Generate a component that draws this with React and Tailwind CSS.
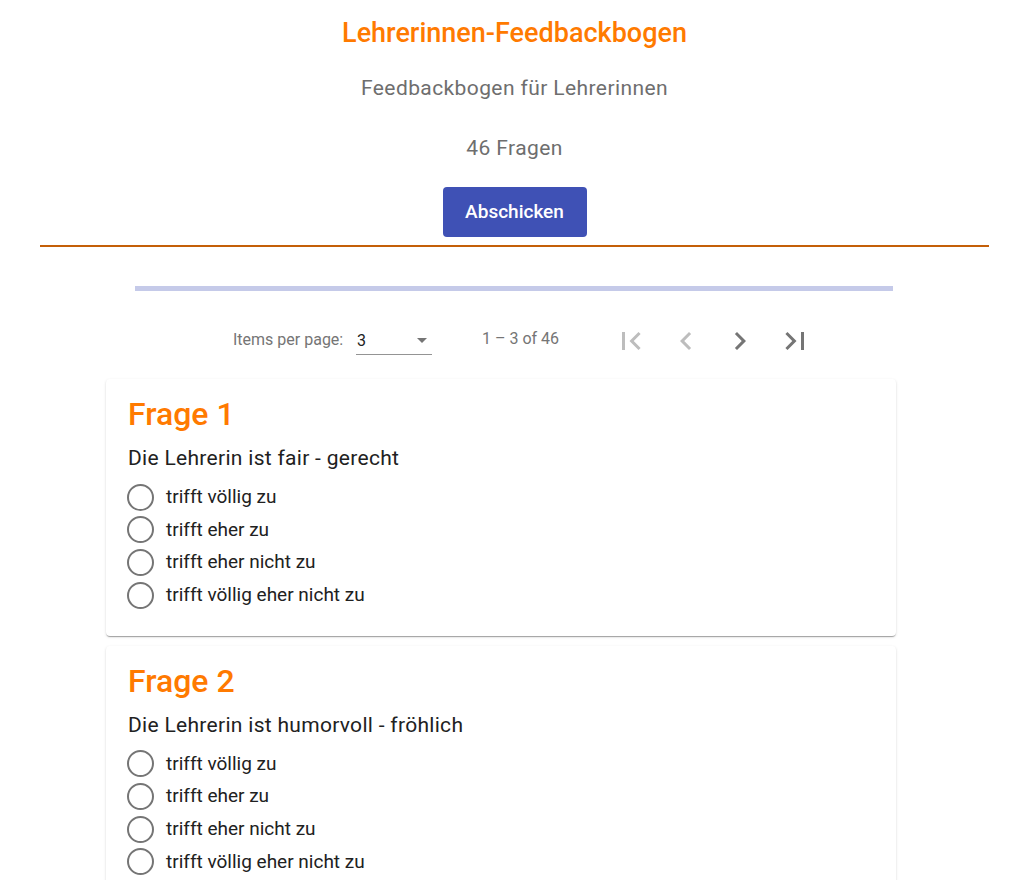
import React from 'react';

const questions = [
  { nr: 1, text: 'Die Lehrerin ist fair - gerecht' },
  { nr: 2, text: 'Die Lehrerin ist humorvoll - fröhlich' },
  { nr: 3, text: 'Die Lehrerin ist geduldig - ruhig' },
];

const options = ['trifft völlig zu', 'trifft eher zu', 'trifft eher nicht zu', 'trifft völlig eher nicht zu'];

function Icon({ d }) {
  return (
    <svg viewBox="0 0 24 24" width="36" height="36" fill="currentColor">
      <path d={d} />
    </svg>
  );
}

function QuestionCard({ q }) {
  return (
    <div className="bg-white rounded-[4px] pt-[16px] pb-[24px] px-[22px] shadow-[0_2px_1px_-1px_rgba(0,0,0,0.2),0_1px_1px_0_rgba(0,0,0,0.14),0_1px_3px_0_rgba(0,0,0,0.12)]">
      <h2 className="text-[32px] leading-[38px] font-medium text-[#ff7a00]">Frage {q.nr}</h2>
      <p className="mt-[11px] text-[21px] leading-[28px] tracking-[0.3px] text-[#212121]">{q.text}</p>
      <div className="mt-[9px] flex flex-col">
        {options.map((o) => (
          <label key={o} className="h-[32.67px] flex items-center gap-[12px] cursor-pointer">
            <span className="-ml-[1px] w-[27px] h-[27px] rounded-full border-2 border-[#757575] shrink-0" />
            <span className="text-[19px] text-[#212121]">{o}</span>
          </label>
        ))}
      </div>
    </div>
  );
}

export default function App() {
  return (
    <div className="w-[1029px] bg-white font-['Roboto',sans-serif] pt-[19px] pb-10">
      <div className="flex flex-col items-center">
        <h1 className="text-[27px] leading-[28px] font-medium text-[#ff7a00]">Lehrerinnen-Feedbackbogen</h1>
        <p className="mt-[29px] text-[21px] leading-[24px] tracking-[0.4px] text-[#6e6e6e]">Feedbackbogen für Lehrerinnen</p>
        <p className="mt-[36px] text-[21px] leading-[24px] tracking-[0.4px] text-[#6e6e6e]">46 Fragen</p>
        <button className="mt-[27px] w-[144px] h-[50px] rounded-[4px] bg-[#3f51b5] text-white text-[19px] font-medium">
          Abschicken
        </button>
      </div>
      <div className="mt-[8px] mx-[40px] border-t-2 border-[#c45f08]" />

      <div className="mt-[39px] ml-[135px] w-[758px] h-[5px] bg-[#c5cae9]" />

      <div className="mt-[21px] h-[56px] pl-[233px] flex items-center text-[16px] text-[#757575]">
        <span className="w-[123px]">Items per page:</span>
        <div className="w-[76px] h-[30px] border-b border-[#949494] flex items-center justify-between pt-[2px]">
          <span className="text-[#212121] pl-[1px]">3</span>
          <span className="mr-[5px] w-0 h-0 border-l-[5px] border-r-[5px] border-t-[5px] border-l-transparent border-r-transparent border-t-[#757575]" />
        </div>
        <span className="ml-[50px] w-[122px] -mt-[2px]">1 – 3 of 46</span>
        <div className="flex items-center mt-[2px]">
          <button className="w-[54.5px] h-[40px] flex items-center justify-center text-[#bdbdbd]">
            <Icon d="M18.41 16.59L13.82 12l4.59-4.59L17 6l-6 6 6 6zM6 6h2v12H6z" />
          </button>
          <button className="w-[54.5px] h-[40px] flex items-center justify-center text-[#bdbdbd]">
            <Icon d="M15.41 7.41L14 6l-6 6 6 6 1.41-1.41L10.83 12z" />
          </button>
          <button className="w-[54.5px] h-[40px] flex items-center justify-center text-[#757575]">
            <Icon d="M10 6L8.59 7.41 13.17 12l-4.58 4.59L10 18l6-6z" />
          </button>
          <button className="w-[54.5px] h-[40px] flex items-center justify-center text-[#757575]">
            <Icon d="M5.59 7.41L10.18 12l-4.59 4.59L7 18l6-6-6-6zM16 6h2v12h-2z" />
          </button>
        </div>
      </div>

      <div className="mt-[11px] ml-[106px] w-[790px] flex flex-col gap-[10px]">
        {questions.map((q) => (
          <QuestionCard key={q.nr} q={q} />
        ))}
      </div>
    </div>
  );
}
